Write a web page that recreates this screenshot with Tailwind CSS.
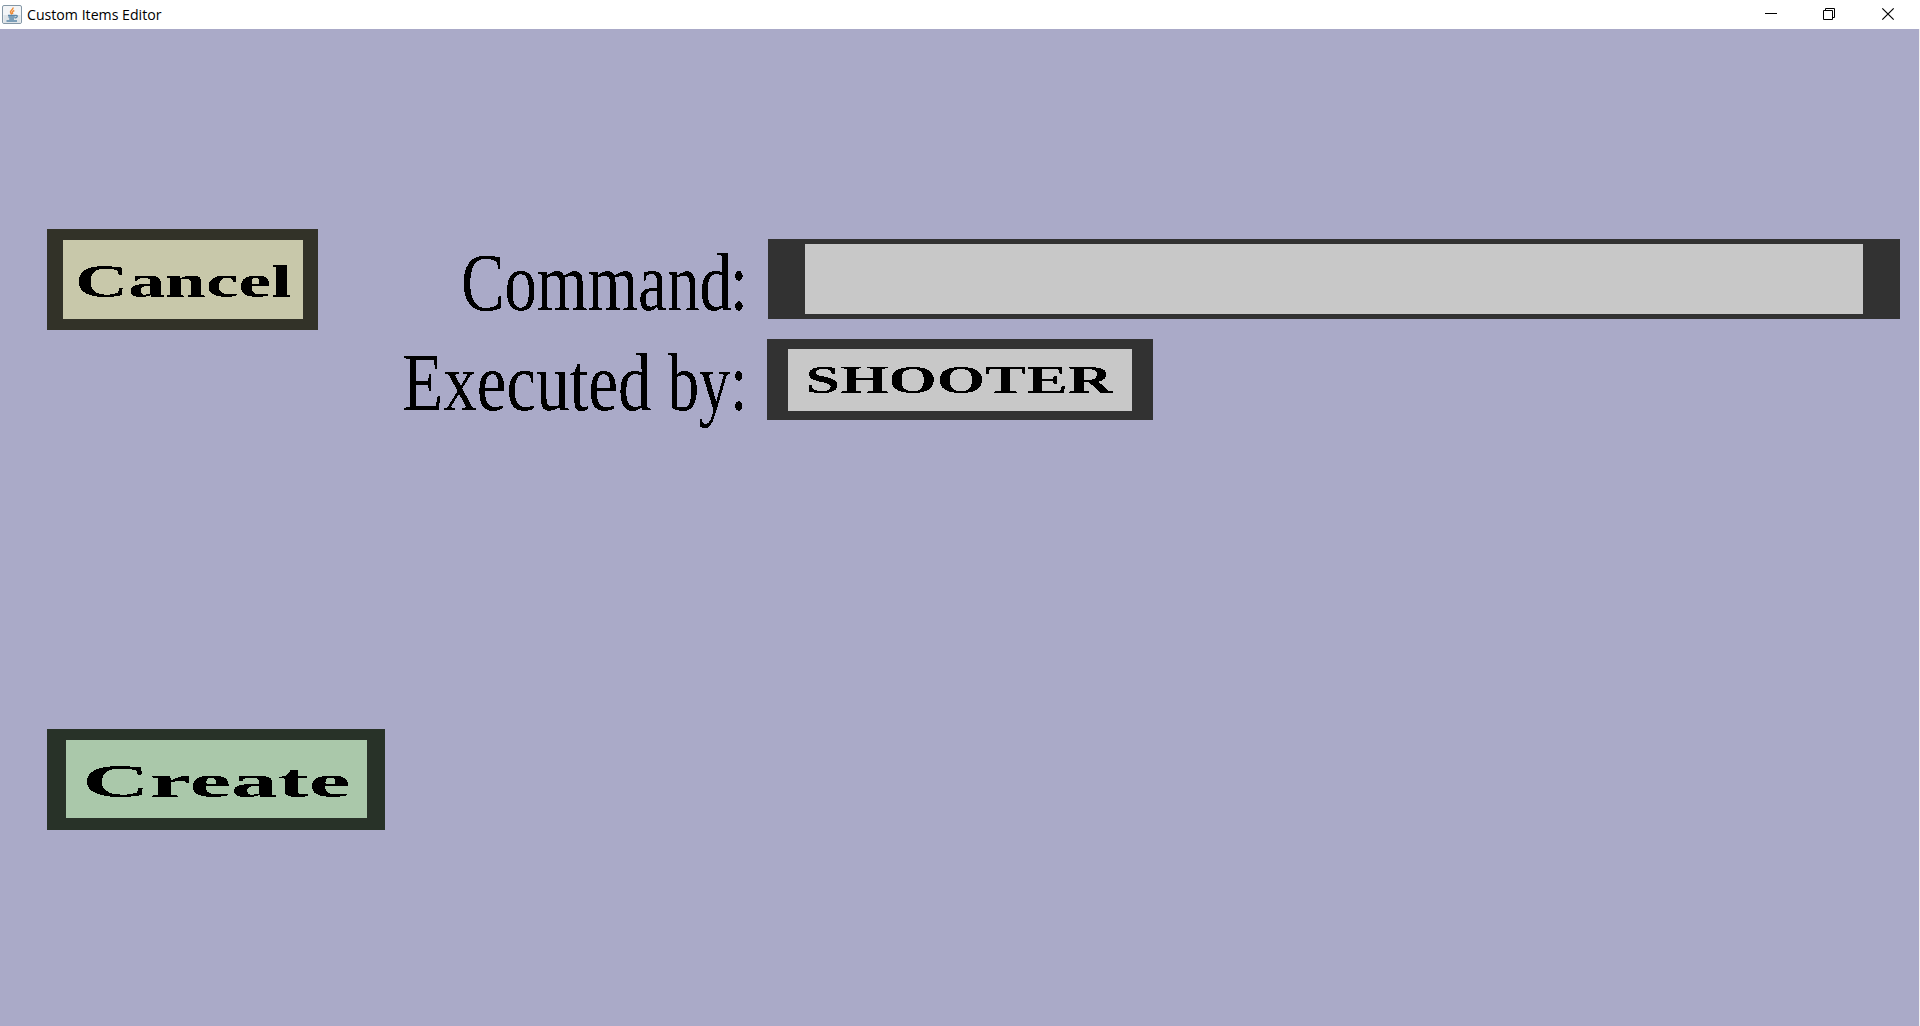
<!DOCTYPE html>
<html lang="en">
<head>
<meta charset="utf-8">
<title>Custom Items Editor</title>
<script src="https://cdn.jsdelivr.net/npm/@tailwindcss/browser@4"></script>
</head>
<body class="w-[1920px] h-[1026px] overflow-hidden flex flex-col bg-[#aaaac8] text-black">
<!-- Hard-edged text rendering -->
<svg class="absolute w-0 h-0" aria-hidden="true"><filter id="crisp" x="-5%" y="-20%" width="110%" height="140%"><feComponentTransfer><feFuncA type="discrete" tableValues="0 1"/></feComponentTransfer></filter></svg>
<header class="h-[29px] shrink-0 bg-white flex items-center justify-between">
  <div class="flex items-center">
    <svg class="ml-[2px] w-5 h-5" viewBox="0 0 20 20" fill="none">
      <rect x=".5" y=".5" width="19" height="18" rx="1.5" fill="#f3f5f7" stroke="#8497a6"/>
      <path d="M1.5 10h17v8h-17z" fill="#dfe4e8"/>
      <path d="M11 2.500c.7 2.200-3.500 3-2.400 5.200l1.200 1.800M12.300 5.500c-2 1-2.500 1.700-1.500 3.500" stroke="#ee8a35" stroke-width="1.500"/>
      <path d="M6 10.500h7.500M6.500 12.200h6.200M7.200 14h4.800M4.500 16h10.500M13.500 10.500c2.700-.5 2.300 2-.8 2.700" stroke="#5b86a8" stroke-width="1.300"/>
    </svg>
    <svg class="ml-[5px] w-[140px] h-[29px] overflow-visible" viewBox="0 0 140 29"><text x="0" y="19.500" textLength="134.500" lengthAdjust="spacingAndGlyphs" font-family="'Open Sans', sans-serif" font-size="15">Custom Items Editor</text></svg>
  </div>
  <div class="flex h-full">
    <svg class="w-[59px] h-[29px]" viewBox="0 0 59 29" stroke="#000"><path d="M24 13.500h12"/></svg>
    <svg class="w-[58px] h-[29px]" viewBox="0 0 58 29" fill="none" stroke="#000"><path d="M23.500 10.500h9v9h-9zM25.500 10v-1.500h9v9H33"/></svg>
    <svg class="w-[62px] h-[29px]" viewBox="0 0 62 29" stroke="#000" stroke-width="1.200"><path d="M24.300 8.300l11.400 11.400M35.700 8.300l-11.400 11.400"/></svg>
  </div>
</header>
<main class="flex-1 border-r border-[#f0f0f0] pl-[47px] pt-[200px]">
  <div class="flex h-[191px]">
    <button class="block w-[271px] h-[101px] bg-[#323228] pl-4 pr-[15px] py-[11px]">
      <svg class="w-[240px] h-[79px] bg-[#c8c8aa]" viewBox="63 240 240 79"><text filter="url(#crisp)" x="75" y="296.500" textLength="216.700" lengthAdjust="spacingAndGlyphs" font-family="'Liberation Serif', serif" font-weight="700" font-size="47">Cancel</text></svg>
    </button>
    <div class="ml-[82px] pt-[10px] flex flex-col gap-5">
      <div class="flex h-20">
        <svg class="w-[368px] h-20 overflow-visible" viewBox="400 239 368 80"><text filter="url(#crisp)" y="310" font-family="'Liberation Serif', serif" font-size="83"><tspan x="461" textLength="271" lengthAdjust="spacingAndGlyphs">Command</tspan><tspan x="730.200" textLength="17.500" lengthAdjust="spacingAndGlyphs">:</tspan></text></svg>
        <div class="w-[1132px] h-20 bg-[#323232] px-[37px] py-[5px]"><input class="block w-full h-full bg-[#c8c8c8]" aria-label="Command"></div>
      </div>
      <div class="flex h-[81px]">
        <svg class="w-[367px] h-[81px] overflow-visible" viewBox="400 339 367 81"><text filter="url(#crisp)" y="410" font-family="'Liberation Serif', serif" font-size="83"><tspan x="402.200" textLength="249.400" lengthAdjust="spacingAndGlyphs">Executed</tspan> <tspan x="668" textLength="79.500" lengthAdjust="spacingAndGlyphs">by:</tspan></text></svg>
        <button class="block w-[386px] h-[81px] bg-[#323232] px-[21px] pt-[10px] pb-[9px]">
          <svg class="w-[344px] h-[62px] bg-[#c8c8c8]" viewBox="788 349 344 62"><text filter="url(#crisp)" x="805.600" y="393" textLength="307.200" lengthAdjust="spacingAndGlyphs" font-family="'Liberation Serif', serif" font-weight="700" font-size="39">SHOOTER</text></svg>
        </button>
      </div>
    </div>
  </div>
  <button class="mt-[309px] block w-[338px] h-[101px] bg-[#283228] pl-[19px] pr-[18px] pt-[11px] pb-3">
    <svg class="w-[301px] h-[78px] bg-[#aac8aa]" viewBox="66 740 301 78"><text filter="url(#crisp)" x="82.200" y="796.500" textLength="268" lengthAdjust="spacingAndGlyphs" font-family="'Liberation Serif', serif" font-weight="700" font-size="47">Create</text></svg>
  </button>
</main>
</body>
</html>
